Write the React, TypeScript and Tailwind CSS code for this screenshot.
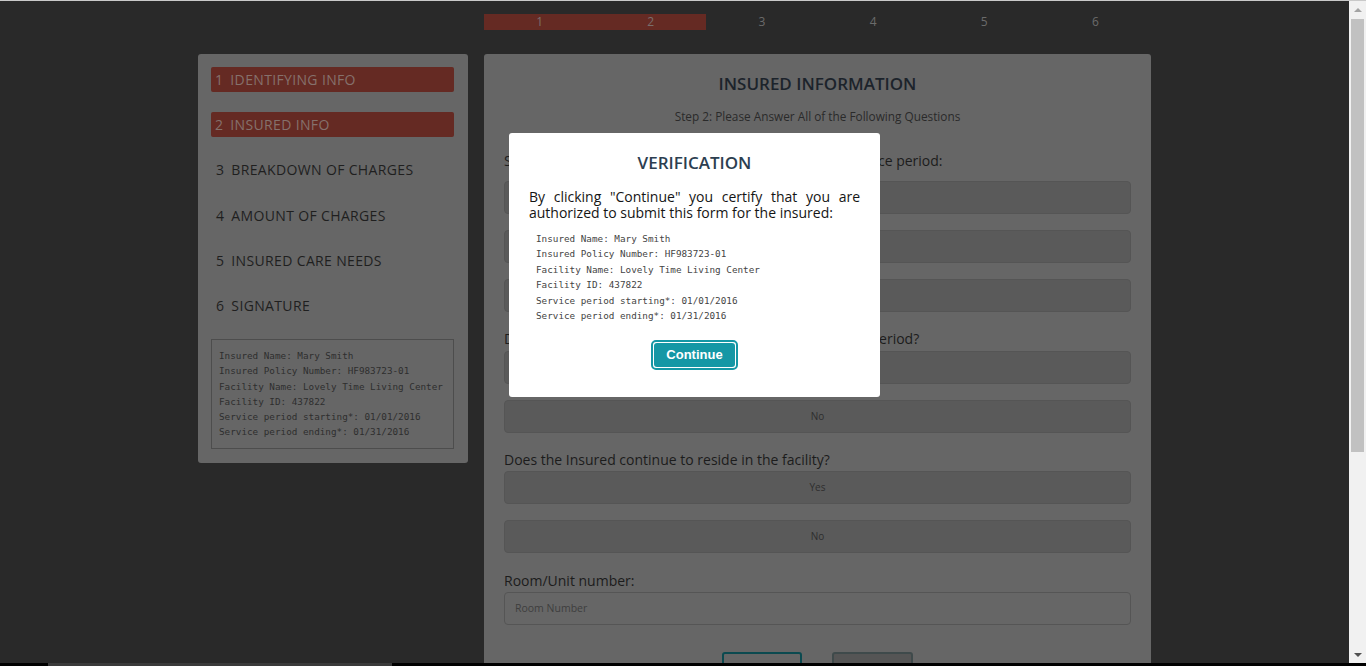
import React from "react";

const steps = [
  { n: 1, label: "IDENTIFYING INFO", done: true },
  { n: 2, label: "INSURED INFO", done: true },
  { n: 3, label: "BREAKDOWN OF CHARGES", done: false },
  { n: 4, label: "AMOUNT OF CHARGES", done: false },
  { n: 5, label: "INSURED CARE NEEDS", done: false },
  { n: 6, label: "SIGNATURE", done: false },
];

const summary = [
  "Insured Name: Mary Smith",
  "Insured Policy Number: HF983723-01",
  "Facility Name: Lovely Time Living Center",
  "Facility ID: 437822",
  "Service period starting*: 01/01/2016",
  "Service period ending*: 01/31/2016",
];

const sans = "font-['Open_Sans','DejaVu_Sans',sans-serif]";
const mono = "font-['DejaVu_Sans_Mono','Liberation_Mono',monospace]";

function ChoiceBox({ text }: { text: string }) {
  return (
    <div className="h-[33px] rounded-[4px] border border-[#555] bg-[#5a5a5a] flex items-center justify-center text-[10px] text-[#2e2e2e]">
      {text}
    </div>
  );
}

function Scrollbar() {
  return (
    <div className="w-[17px] bg-[#f1f1f1] flex flex-col items-center">
      <div className="h-[17px] flex items-center justify-center">
        <div className="w-0 h-0 border-x-[4px] border-x-transparent border-b-[4px] border-b-[#a3a3a3]" />
      </div>
      <div className="w-[13px] h-[433px] bg-[#c1c1c1] mt-[1px]" />
      <div className="flex-1" />
      <div className="h-[17px] flex items-center justify-center">
        <div className="w-0 h-0 border-x-[4px] border-x-transparent border-t-[4px] border-t-[#505050]" />
      </div>
    </div>
  );
}

export default function App() {
  return (
    <div className={`w-[1366px] h-[666px] overflow-hidden flex flex-col bg-black ${sans}`}>
      <div className="h-[1px] bg-[#c9c9c9]" />
      <div className="h-[662px] flex">
        {/* page (shown under a dark backdrop) */}
        <div className="relative flex-1 bg-[#292929] overflow-hidden">
          <div className="w-[953px] mx-auto grid grid-cols-[270px_667px] gap-x-4">
            <div />
            {/* progress bar */}
            <div className="mt-[13px] h-[16px] grid grid-cols-6 text-[12px] leading-[16px]">
              {steps.map((s) => (
                <div
                  key={s.n}
                  className={`text-center ${s.done ? "bg-[#652a23] text-[#7a6e6c]" : "text-[#6b6b6b]"}`}
                >
                  {s.n}
                </div>
              ))}
            </div>

            {/* left sidebar */}
            <div className="mt-[24px] self-start bg-[#666] rounded-[3px] pl-[13px] pr-[14px] pt-[13px] pb-[14px]">
              <div className="flex flex-col gap-[20.2px]">
                {steps.map((s) => (
                  <div
                    key={s.n}
                    className={`h-[25px] rounded-[2px] px-[4px] flex items-center text-[14px] tracking-[0.35px] ${
                      s.done ? "bg-[#652a23] text-[#85716c]" : "text-[#1f1f1f] pl-[5px]"
                    }`}
                  >
                    <span className="mr-[7px]">{s.n}</span>
                    {s.label}
                  </div>
                ))}
              </div>
              <div className={`mt-[21px] border border-[#4d4d4d] px-[7px] pt-[8px] pb-[8px] text-[9.3px] leading-[15.3px] text-[#2e2e2e] ${mono}`}>
                {summary.map((l) => (
                  <div key={l}>{l}</div>
                ))}
              </div>
            </div>

            {/* main form */}
            <div className="mt-[24px] bg-[#666] rounded-[3px] px-5 pt-5 pb-10">
              <h1 className="text-center text-[17px] leading-[20px] text-[#1c232b] font-semibold">INSURED INFORMATION</h1>
              <p className="mt-[14px] text-center text-[11.8px] leading-[16px] text-[#2a2a2a]">
                Step 2: Please Answer All of the Following Questions
              </p>

              <div className="mt-[28px] text-[14px] leading-[18px] text-[#1c1c1c]">
                Select the levels of care the Insured received for this service period:
              </div>
              <div className="mt-[11px] flex flex-col gap-4">
                <ChoiceBox text="Assisted Living" />
                <ChoiceBox text="Nursing Home" />
                <ChoiceBox text="Adult Day Care" />
              </div>

              <div className="mt-[18px] text-[14px] leading-[18px] text-[#1c1c1c]">
                Did the Insured leave the facility for any time during the period?
              </div>
              <div className="mt-[3px] flex flex-col gap-4">
                <ChoiceBox text="Yes" />
                <ChoiceBox text="No" />
              </div>

              <div className="mt-[18px] text-[14px] leading-[18px] text-[#1c1c1c]">
                Does the Insured continue to reside in the facility?
              </div>
              <div className="mt-[2px] flex flex-col gap-4">
                <ChoiceBox text="Yes" />
                <ChoiceBox text="No" />
              </div>

              <div className="mt-[19px] text-[14px] leading-[18px] text-[#1c1c1c]">Room/Unit number:</div>
              <div className="mt-[2px] h-[33px] rounded-[4px] border border-[#555] bg-[#666] flex items-center px-[10px] text-[10.5px] text-[#3e3e3e]">
                Room Number
              </div>

              <div className="mt-[27px] flex justify-center gap-[30px]">
                <div className="w-[80px] h-[36px] rounded-[3px] border-2 border-[#0b4a50]" />
                <div className="w-[81px] h-[36px] rounded-[3px] border-2 border-[#3f4a4b] bg-[#555]" />
              </div>
            </div>
          </div>

          {/* verification modal */}
          <div className="absolute left-[509px] top-[132px] w-[371px] h-[264px] bg-white rounded-[3px] px-5 pt-5">
            <h2 className="text-center text-[17px] leading-[20px] text-[#2c3e50] font-semibold">VERIFICATION</h2>
            <p className="mt-[16px] text-[14px] leading-[16px] text-[#151515] text-justify">
              By clicking "Continue" you certify that you are authorized to submit this form for the insured:
            </p>
            <div className={`mt-[10px] pl-[7px] text-[9.3px] leading-[15.4px] text-[#444] ${mono}`}>
              {summary.map((l) => (
                <div key={l}>{l}</div>
              ))}
            </div>
            <div className="mt-[17px] flex justify-center">
              <button className="h-[30px] w-[87px] rounded-[5px] border-2 border-[#1597a5] p-[1px] bg-white">
                <span className="block h-full w-full rounded-[3px] bg-[#1597a5] text-white font-bold text-[13px] leading-[24px] font-['Liberation_Sans',Arial,sans-serif]">
                  Continue
                </span>
              </button>
            </div>
          </div>
        </div>
        <Scrollbar />
      </div>
      <div className="h-[3px] bg-black flex">
        <div className="ml-[48px] w-[344px] bg-[#3a3a3a]" />
      </div>
    </div>
  );
}
